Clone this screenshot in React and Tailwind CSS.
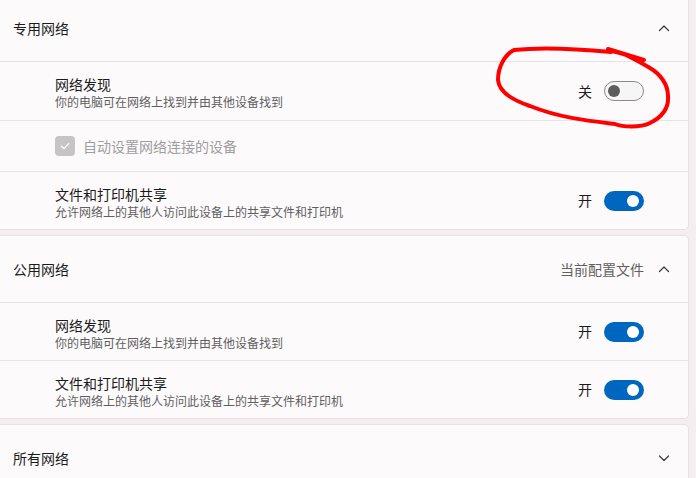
import React from 'react'

const font = { fontFamily: '"Noto Sans CJK SC", "Noto Sans", sans-serif' }

function Toggle({ on }) {
  if (on) {
    return (
      <div className="w-[40px] h-[20px] rounded-full bg-[#0067c0] flex items-center justify-end pr-[5px]">
        <div className="w-[12px] h-[12px] rounded-full bg-white" />
      </div>
    )
  }
  return (
    <div className="w-[40px] h-[20px] rounded-full bg-[#f7f6f7] border border-[#8b8b8b] flex items-center pl-[3px]">
      <div className="w-[12px] h-[12px] rounded-full bg-[#5d5d5d]" />
    </div>
  )
}

function Chevron({ up }) {
  return (
    <svg width="14" height="14" viewBox="0 0 14 14" className="text-[#3a3a3a]">
      <path
        d={up ? 'M2.5 9.5 L7 5 L11.5 9.5' : 'M2.5 5 L7 9.5 L11.5 5'}
        fill="none"
        stroke="currentColor"
        strokeWidth="1.2"
        strokeLinecap="round"
        strokeLinejoin="round"
      />
    </svg>
  )
}

function Header({ title, extra, up, h }) {
  return (
    <div className={`flex items-center pl-[13px] pr-[17px] ${h}`}>
      <span className="flex-1 text-[14px] text-[#1b1b1b]">{title}</span>
      {extra && <span className="text-[14px] text-[#5f5f5f] mr-[13px]">{extra}</span>}
      <Chevron up={up} />
    </div>
  )
}

function SettingRow({ title, desc, on, h }) {
  return (
    <div className={`flex items-center pl-[55px] pr-[44px] border-t border-[#e8e3e5] ${h}`}>
      <div className="flex-1 flex flex-col pt-[2px]">
        <span className="text-[14px] leading-[20px] text-[#1b1b1b]">{title}</span>
        <span className="text-[12px] leading-[16px] text-[#5f5f5f]">{desc}</span>
      </div>
      <span className="text-[14px] text-[#1b1b1b] mr-[12px]">{on ? '开' : '关'}</span>
      <Toggle on={on} />
    </div>
  )
}

function CheckRow() {
  return (
    <div className="flex items-center pl-[55px] border-t border-[#e8e3e5] h-[51px]">
      <div className="w-[20px] h-[20px] rounded-[4px] bg-[#c6c4c5] flex items-center justify-center">
        <svg width="12" height="12" viewBox="0 0 12 12">
          <path d="M2.5 6.2 L5 8.6 L9.6 3.6" fill="none" stroke="white" strokeWidth="1.3" strokeLinecap="round" strokeLinejoin="round" />
        </svg>
      </div>
      <span className="ml-[8px] text-[14px] text-[#a09d9f]">自动设置网络连接的设备</span>
    </div>
  )
}

export default function App() {
  return (
    <div className="relative w-[696px] h-[478px] overflow-hidden bg-[#f4eef0]" style={font}>
      <div className="flex flex-col gap-[5px] pr-[7px]">
        {/* Private network */}
        <div className="bg-[#fcfafb] border border-l-0 border-t-0 border-[#e7e1e3] rounded-br-[5px]">
          <Header title="专用网络" up h="h-[61px] pb-[5px]" />
          <SettingRow title="网络发现" desc="你的电脑可在网络上找到并由其他设备找到" on={false} h="h-[59px]" />
          <CheckRow />
          <SettingRow title="文件和打印机共享" desc="允许网络上的其他人访问此设备上的共享文件和打印机" on h="h-[58px]" />
        </div>

        {/* Public network */}
        <div className="bg-[#fcfafb] border border-l-0 border-[#e7e1e3] rounded-r-[5px]">
          <Header title="公用网络" extra="当前配置文件" up h="h-[66px]" />
          <SettingRow title="网络发现" desc="你的电脑可在网络上找到并由其他设备找到" on h="h-[58px]" />
          <SettingRow title="文件和打印机共享" desc="允许网络上的其他人访问此设备上的共享文件和打印机" on h="h-[58px]" />
        </div>

        {/* All networks */}
        <div className="bg-[#fcfafb] border border-l-0 border-[#e7e1e3] rounded-r-[5px]">
          <Header title="所有网络" h="h-[66px]" />
        </div>
      </div>

      {/* red annotation */}
      <svg className="absolute left-0 top-0 pointer-events-none" width="696" height="478">
        <path
          d="M608 49 L644 60 M611 52 C580 49 540 47 514 50 C504 55 498 68 498 80 C499 92 512 100 530 106 C560 118 590 121 615 124 C622 127 640 128 650 123 C662 117 669 108 668 96 C668 84 660 74 650 68 C640 62 632 58 626 55 C618 52 612 51 608 50"
          fill="none"
          stroke="#ff0000"
          strokeWidth="4"
          strokeLinecap="round"
          strokeLinejoin="round"
        />
      </svg>
    </div>
  )
}
